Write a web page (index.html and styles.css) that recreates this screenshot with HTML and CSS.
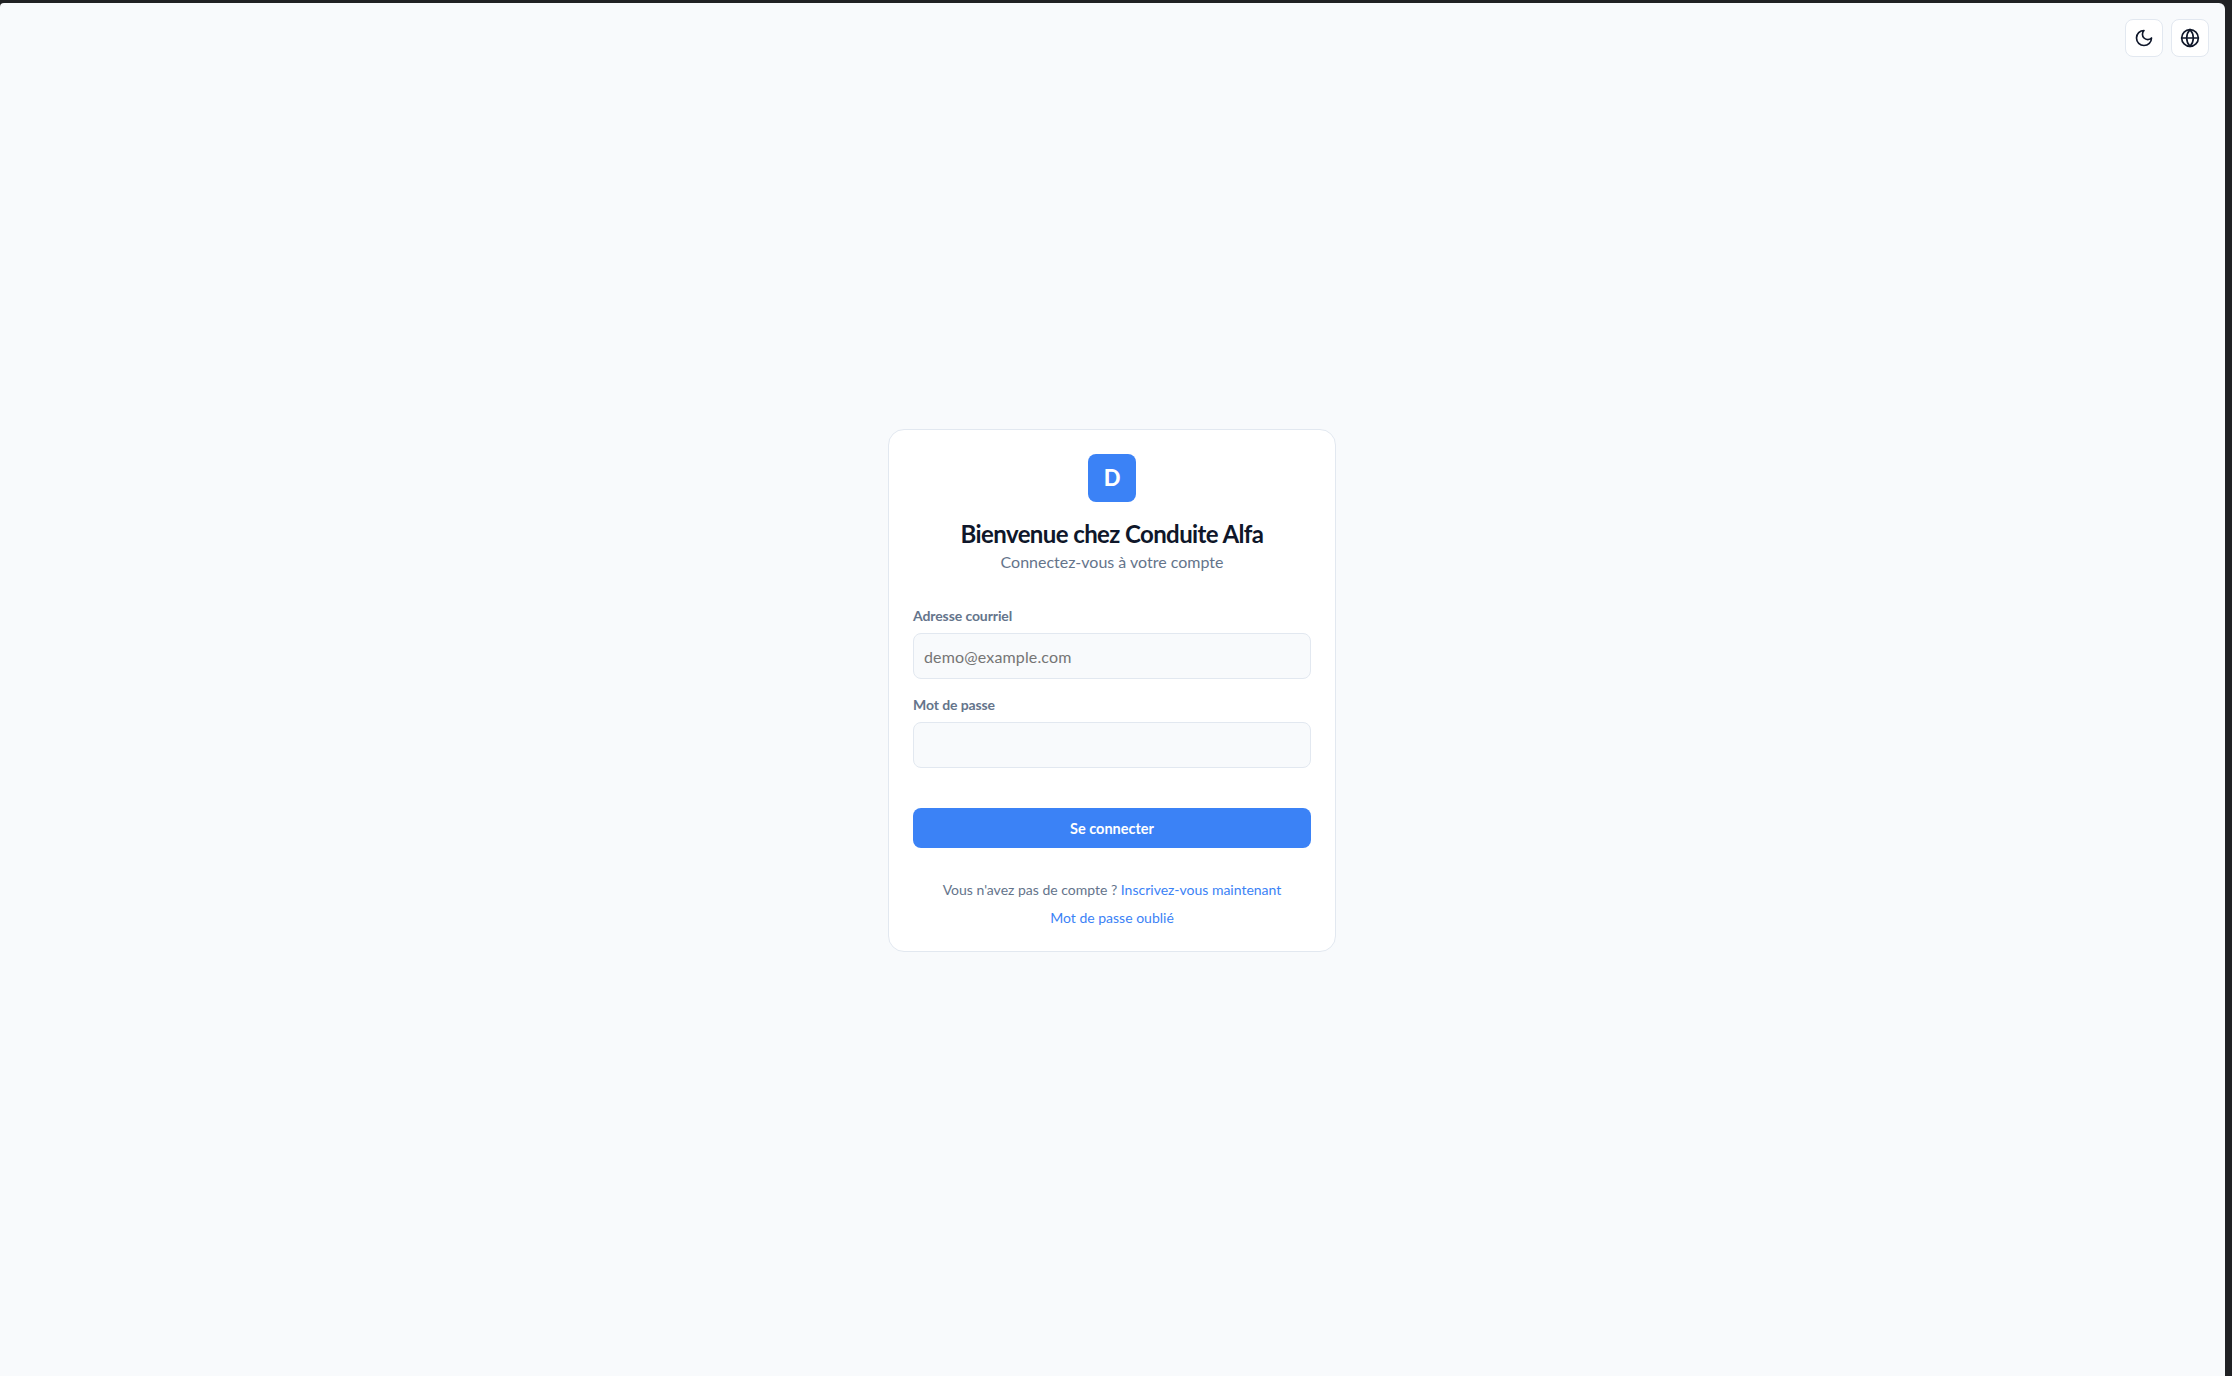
FILE: index.html
```html
<!DOCTYPE html>
<html lang="fr">
<head>
  <meta charset="UTF-8">
  <meta name="viewport" content="width=device-width, initial-scale=1.0">
  <title>Conduite Alfa - Connexion</title>
  <link rel="stylesheet" href="styles.css">
</head>
<body>

<main class="app">
  <div class="top-actions">
    <button type="button" class="icon-btn" aria-label="Mode sombre">
      <svg viewBox="0 0 24 24"><path d="M12 3a6 6 0 0 0 9 9 9 9 0 1 1-9-9Z"/></svg>
    </button>
    <button type="button" class="icon-btn" aria-label="Langue">
      <svg viewBox="0 0 24 24"><circle cx="12" cy="12" r="10"/><path d="M12 2a14.5 14.5 0 0 0 0 20 14.5 14.5 0 0 0 0-20"/><path d="M2 12h20"/></svg>
    </button>
  </div>

  <section class="card">
    <div class="logo">D</div>
    <h1>Bienvenue chez Conduite Alfa</h1>
    <p class="subtitle">Connectez-vous à votre compte</p>

    <form class="login-form">
      <div class="form-group">
        <label for="email">Adresse courriel</label>
        <input type="email" id="email" placeholder="demo@example.com">
      </div>
      <div class="form-group">
        <label for="password">Mot de passe</label>
        <input type="password" id="password">
      </div>
      <button type="button" class="submit">Se connecter</button>
    </form>

    <p class="links">Vous n'avez pas de compte ? <a href="#">Inscrivez-vous maintenant</a></p>
    <p class="links forgot"><a href="#">Mot de passe oublié</a></p>
  </section>
</main>

</body>
</html>
```

FILE: styles.css
```css
* {
  margin: 0;
  padding: 0;
  box-sizing: border-box;
}
body {
  font-family: "Lato", "Noto Sans", sans-serif;
  background-color: #202124;
  color: #0f172a;
  height: 100vh;
  overflow: hidden;
  padding: 3px 7px 0 0;
}
.app {
  position: relative;
  height: 100%;
  padding: 2px 1px 0 0;
  background-color: #f8fafc;
  border-radius: 4px 6px 0 0;
  display: flex;
  align-items: center;
  justify-content: center;
}
.top-actions {
  position: absolute;
  top: 16px;
  right: 16px;
  display: flex;
  gap: 8px;
}
.icon-btn {
  width: 38px;
  height: 38px;
  display: flex;
  align-items: center;
  justify-content: center;
  background: white;
  border: 1px solid #e2e8f0;
  border-radius: 8px;
}
.icon-btn svg {
  width: 20px;
  height: 20px;
  fill: none;
  stroke: #0f172a;
  stroke-width: 2;
  stroke-linecap: round;
  stroke-linejoin: round;
}
.card {
  width: 448px;
  padding: 24px 24px 23px;
  background: white;
  border: 1px solid #e2e8f0;
  border-radius: 16px;
  text-align: center;
}
.logo {
  width: 48px;
  height: 48px;
  margin: 0 auto 16px;
  background: #3b82f6;
  border-radius: 8px;
  color: white;
  font-size: 22px;
  font-weight: 900;
  line-height: 48px;
}
h1 {
  font-size: 24px;
  font-weight: 700;
  line-height: 32px;
  letter-spacing: -0.6px;
}
.subtitle {
  font-size: 16px;
  line-height: 24px;
  color: #64748b;
}
.login-form {
  margin-top: 32px;
  text-align: left;
}
.form-group {
  margin-bottom: 16px;
}
.form-group label {
  display: block;
  margin-bottom: 8px;
  font-size: 14px;
  line-height: 19px;
  font-weight: 700;
  letter-spacing: -0.1px;
  color: #64748b;
}
.form-group input {
  display: block;
  width: 100%;
  height: 46px;
  padding: 0 10px;
  font-family: inherit;
  font-size: 16px;
  letter-spacing: 0.15px;
  color: #0f172a;
  background: #f8fafc;
  border: 1px solid #e2e8f0;
  border-radius: 8px;
}
.form-group input::placeholder {
  color: #757575;
}
.submit {
  display: block;
  width: 100%;
  height: 40px;
  margin-top: 40px;
  font-family: inherit;
  font-size: 14.5px;
  font-weight: 700;
  color: white;
  background: #3b82f6;
  border: none;
  border-radius: 8px;
}
.links {
  margin-top: 32px;
  font-size: 14px;
  line-height: 20px;
  color: #64748b;
}
.links.forgot {
  margin-top: 8px;
}
.links a {
  color: #3b82f6;
  text-decoration: none;
}
```
